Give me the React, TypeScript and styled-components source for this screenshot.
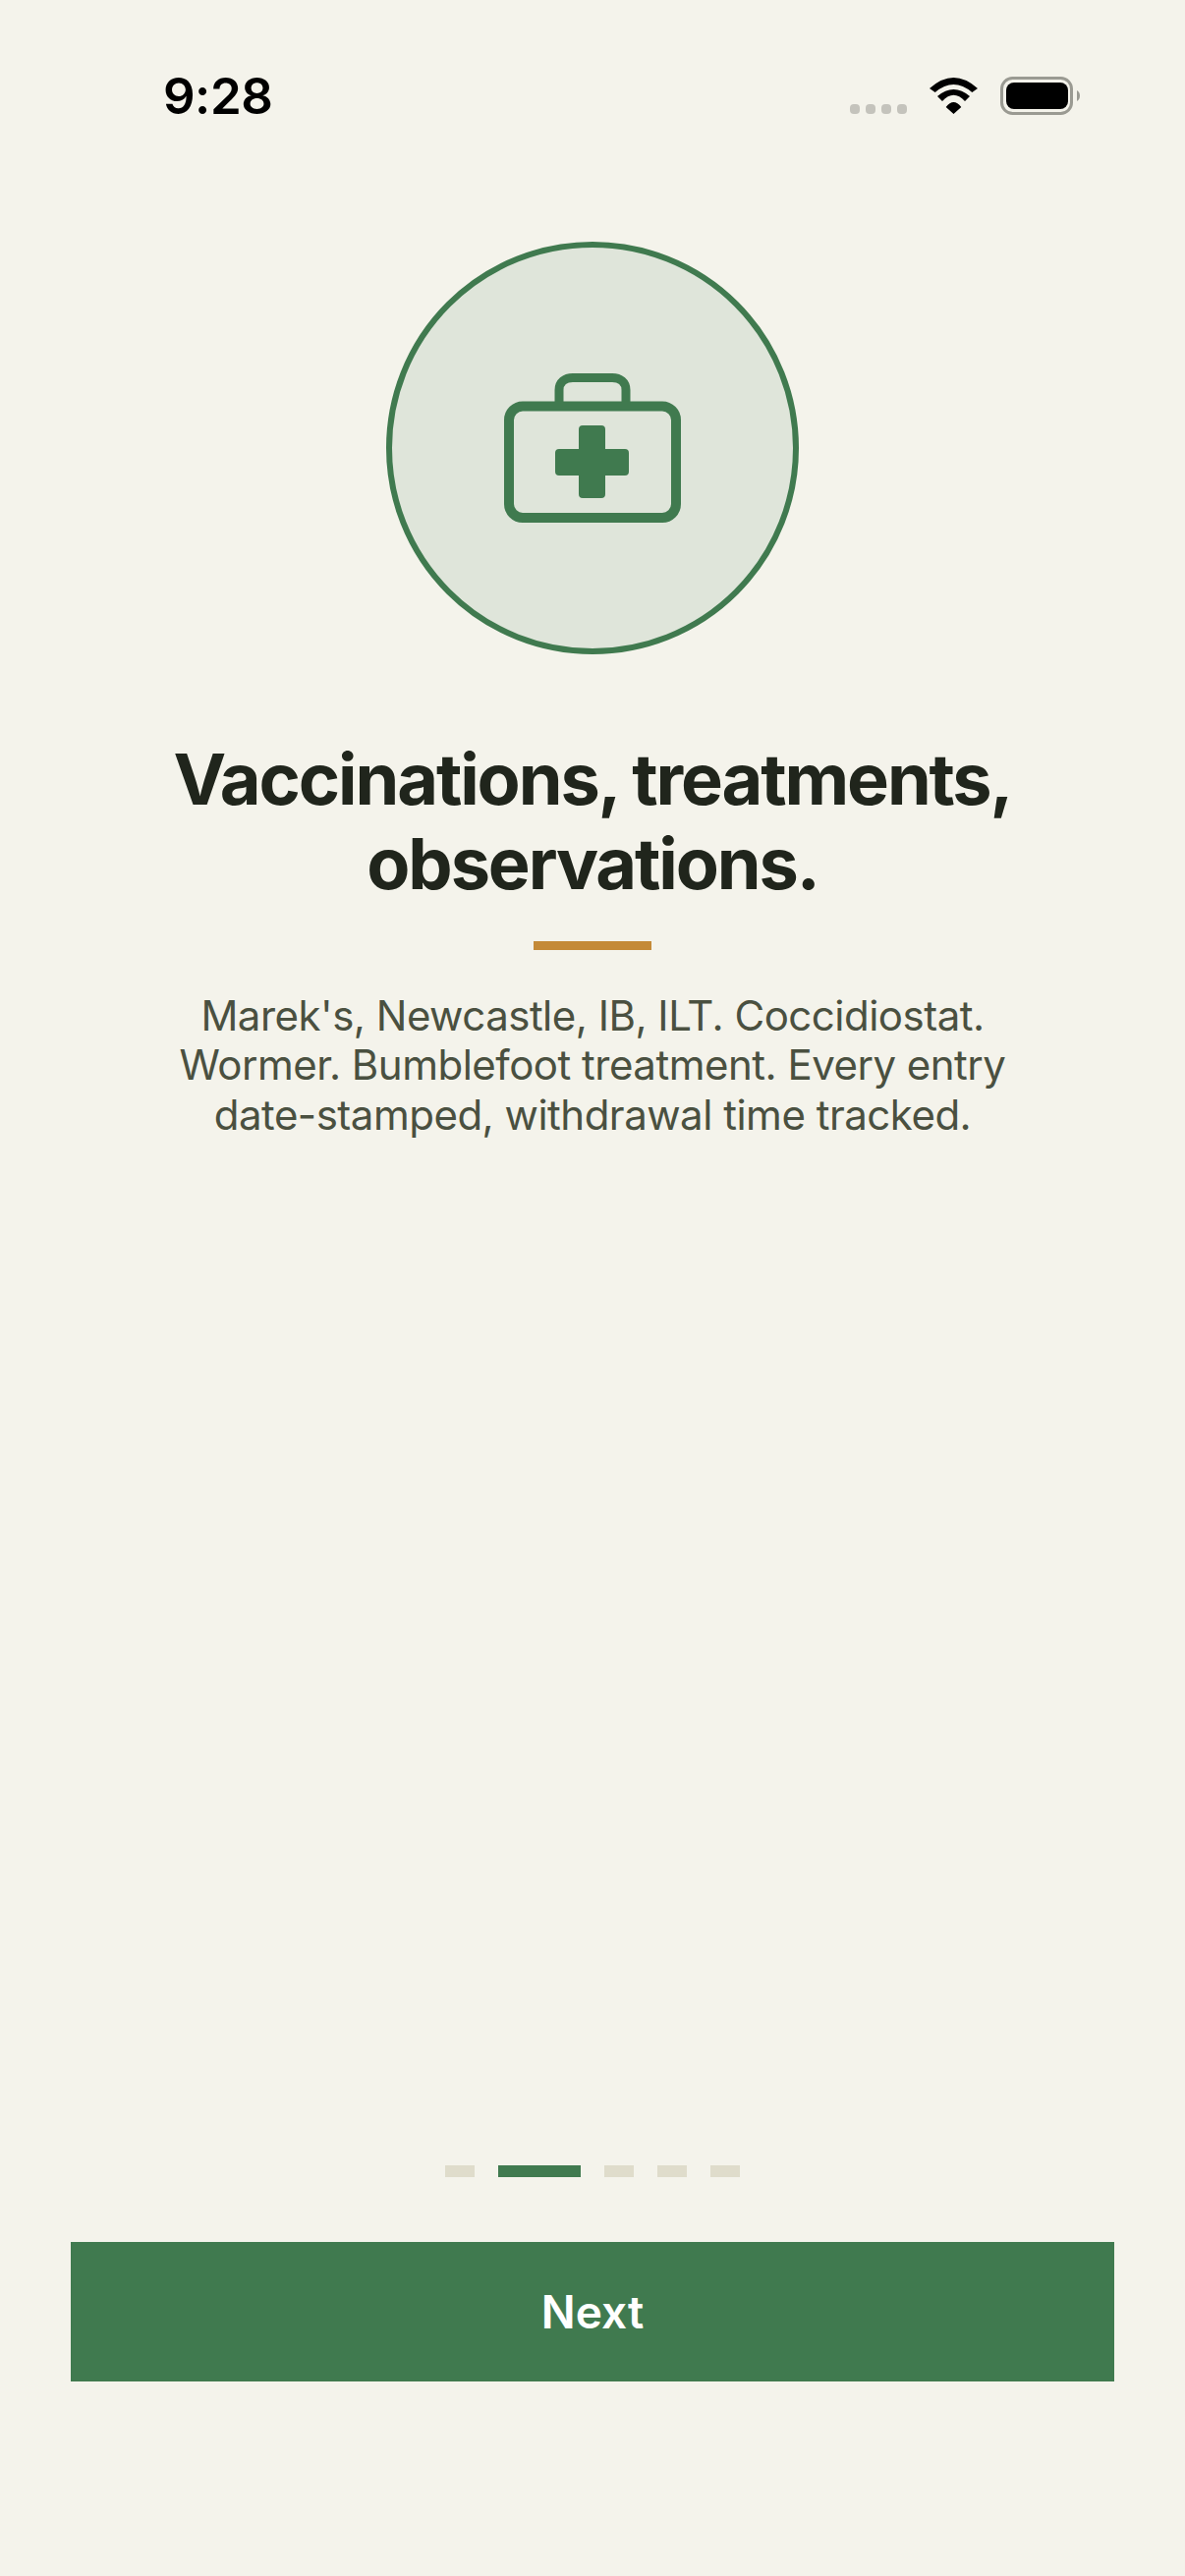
import React from "react";
import styled, { createGlobalStyle } from "styled-components";

const Global = createGlobalStyle`
  html, body { margin: 0; padding: 0; background: #f4f3eb; }
  * { box-sizing: border-box; }
`;

const Screen = styled.div`
  width: 1206px;
  height: 2622px;
  background: #f4f3eb;
  display: flex;
  flex-direction: column;
  align-items: center;
  font-family: Inter, "Liberation Sans", sans-serif;
  overflow: hidden;
`;

const StatusBar = styled.div`
  width: 100%;
  height: 246px;
  padding: 65px 106px 0 166px;
  display: flex;
  justify-content: space-between;
  align-items: flex-start;
  flex-shrink: 0;
`;

const Time = styled.span`
  font-weight: 600;
  font-size: 51px;
  line-height: 66px;
  letter-spacing: -0.5px;
  color: #000;
`;

const StatusIcons = styled.div`
  display: flex;
  padding-top: 13px;
`;

const Medallion = styled.div`
  width: 420px;
  height: 420px;
  border-radius: 50%;
  border: 6px solid #407a4f;
  background: #dfe5da;
  display: flex;
  align-items: center;
  justify-content: center;
  flex-shrink: 0;
`;

const Title = styled.h1`
  margin: 84px 0 0;
  font-size: 72px;
  line-height: 86px;
  font-weight: 700;
  letter-spacing: -2.1px;
  color: #20251c;
  text-align: center;
`;

const Rule = styled.div`
  width: 120px;
  height: 9px;
  margin-top: 36px;
  background: #c48a38;
`;

const Body = styled.p`
  margin: 42px 0 0;
  font-size: 42px;
  line-height: 50.4px;
  font-weight: 400;
  letter-spacing: -0.5px;
  color: #4a5040;
  text-align: center;
`;

const Spacer = styled.div`
  flex: 1;
`;

const Pager = styled.div`
  display: flex;
  gap: 24px;
`;

const Dash = styled.div<{ $active?: boolean }>`
  width: ${(p) => (p.$active ? "84px" : "30px")};
  height: 12px;
  background: ${(p) => (p.$active ? "#407a4f" : "#dfdccb")};
`;

const NextButton = styled.button`
  width: 1062px;
  height: 142px;
  margin: 66px 0 198px;
  padding: 0;
  border: 0;
  background: #407a4f;
  color: #fff;
  font-family: inherit;
  font-size: 46px;
  font-weight: 600;
`;

const StatusGlyphs = () => (
  <svg width="236" height="40" viewBox="0 0 236 40">
    <g fill="#c4c3bc">
      <rect x="1" y="28" width="10" height="10" rx="4" />
      <rect x="17" y="28" width="10" height="10" rx="4" />
      <rect x="33" y="28" width="10" height="10" rx="4" />
      <rect x="49" y="28" width="10" height="10" rx="4" />
    </g>
    <path
      d="M82 12Q106.500 -10 131 12L125.300 16Q106.500 0 87.700 16ZM90 20Q106.500 6 123 20L118 25Q106.500 12.400 95 25ZM98.700 31Q106.500 21 114.300 31L106.500 38Z"
      fill="#000"
    />
    <rect x="155.500" y="1.500" width="71" height="36" rx="11" fill="none" stroke="#9a9a92" strokeWidth="3" />
    <rect x="160" y="6" width="63" height="27" rx="8" fill="#000" />
    <path d="M232 14C236 16 236 23 232 25Z" fill="#9a9a92" />
  </svg>
);

const KitIcon = () => (
  <svg width="180" height="152" viewBox="0 0 180 152">
    <path
      d="M56 33V17C56 9 62 4.500 70 4.500H110C118 4.500 124 9 124 17V33"
      fill="none"
      stroke="#407a4f"
      strokeWidth="9"
    />
    <rect x="5" y="33.500" width="170" height="113.500" rx="14" fill="none" stroke="#407a4f" strokeWidth="10" />
    <path
      d="M80 53H99A4 4 0 0 1 103 57V77H123A4 4 0 0 1 127 81V100A4 4 0 0 1 123 104H103V123A4 4 0 0 1 99 127H80A4 4 0 0 1 76 123V104H56A4 4 0 0 1 52 100V81A4 4 0 0 1 56 77H76V57A4 4 0 0 1 80 53Z"
      fill="#407a4f"
    />
  </svg>
);

export default function App() {
  return (
    <Screen>
      <Global />
      <StatusBar>
        <Time>9:28</Time>
        <StatusIcons>
          <StatusGlyphs />
        </StatusIcons>
      </StatusBar>
      <Medallion>
        <KitIcon />
      </Medallion>
      <Title>
        Vaccinations, treatments,
        <br />
        observations.
      </Title>
      <Rule />
      <Body>
        Marek's, Newcastle, IB, ILT. Coccidiostat.
        <br />
        Wormer. Bumblefoot treatment. Every entry
        <br />
        date-stamped, withdrawal time tracked.
      </Body>
      <Spacer />
      <Pager>
        <Dash />
        <Dash $active />
        <Dash />
        <Dash />
        <Dash />
      </Pager>
      <NextButton>Next</NextButton>
    </Screen>
  );
}
